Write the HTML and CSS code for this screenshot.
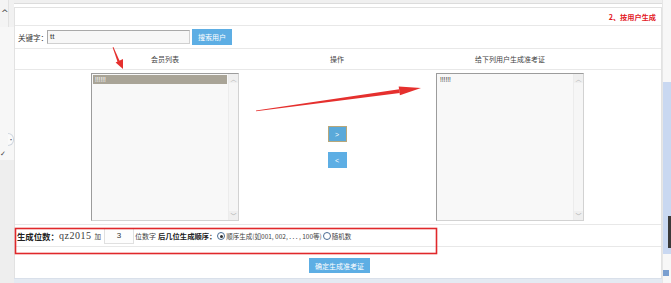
FILE: index.html
```
<!DOCTYPE html>
<html>
<head>
<meta charset="utf-8">
<link rel="stylesheet" href="styles.css">
</head>
<body>
<div class="page">
  <div class="leftbar">
    <div class="lb-top"><span class="caret">^</span></div>
    <div class="lb-mid"><span class="tab">•</span><span class="check">✓</span></div>
    <div class="lb-bot"></div>
  </div>
  <div class="main">
    <div class="topband"></div>
    <div class="panel">
      <div class="row row-title"><span class="title">2、按用户生成</span></div>
      <div class="row row-search">
        <span class="lbl">关键字：</span>
        <div class="kw">tt</div>
        <div class="btn btn-search">搜索用户</div>
      </div>
      <div class="row row-head grid3">
        <div class="hcell">会员列表</div>
        <div class="hcell">操作</div>
        <div class="hcell">给下列用户生成准考证</div>
      </div>
      <div class="row row-body grid3">
        <div class="bcell">
          <div class="listbox">
            <div class="lb-content"><div class="opt opt-sel">!!!!!!</div></div>
            <div class="lb-scroll"><span class="sarrow">︿</span><span class="sarrow">﹀</span></div>
          </div>
        </div>
        <div class="bcell ops">
          <div class="btn btn-op btn-focus">&gt;</div>
          <div class="btn btn-op">&lt;</div>
        </div>
        <div class="bcell">
          <div class="listbox">
            <div class="lb-content"><div class="opt">!!!!!!</div></div>
            <div class="lb-scroll"><span class="sarrow">︿</span><span class="sarrow">﹀</span></div>
          </div>
        </div>
      </div>
      <div class="row row-opts">
        <span class="b b1">生成位数：</span>
        <span class="prefix">qz2015</span>
        <span class="t t-add">加</span>
        <div class="num">3</div>
        <span class="t t-digits">位数字</span>
        <span class="b b2">后几位生成顺序：</span>
        <span class="radio on"></span><span class="t t-seq">顺序生成(如001, 002, . . . , 100等)</span>
        <span class="radio"></span><span class="t">随机数</span>
      </div>
      <div class="row row-submit">
        <div class="btn btn-submit">确定生成准考证</div>
      </div>
    </div>
    <div class="bottomband"></div>
  </div>
  <div class="rightbar">
    <div class="rb-thumb"><div class="rb-dark"></div></div>
    <div class="rb-icon"></div>
  </div>
  <svg class="annot" width="671" height="283" viewBox="0 0 671 283">
    <rect x="15.5" y="228.5" width="421" height="25" fill="none" stroke="#e0282b" stroke-width="1.6"/>
    <polygon points="112.6,47.2 113.4,46.9 119.8,61.3 117.6,62.1" fill="#e5302e"/>
    <polygon points="123,69 115.6,62.6 123,59" fill="#e5302e"/>
    <polygon points="256,111.3 256,110.6 399.2,89.2 399.8,93" fill="#e5302e"/>
    <polygon points="421,88 398.7,86.6 399.9,95.2" fill="#e5302e"/>
  </svg>
</div>
</body>
</html>
```
FILE: styles.css
```
html, body { margin: 0; padding: 0; }
body {
  width: 671px; height: 283px; overflow: hidden;
  font-family: "Noto Sans CJK SC", "Noto Sans", sans-serif;
  font-size: 7px; color: #333; background: #fff;
}
.page { position: relative; display: flex; width: 671px; height: 283px; }

.leftbar { width: 14px; display: flex; flex-direction: column; background: #f1f1f1; }
.lb-top { height: 27px; width: 8px; border-right: 1px solid #e2e2e2; background: #f4f4f4; }
.caret { display: block; font-family: "DejaVu Sans", sans-serif; font-size: 9px; line-height: 9px; color: #444; padding: 9px 0 0 1px; }
.lb-mid { height: 133px; background: #f7f7f7; display: flex; flex-direction: column; }
.tab { margin: 106px 0 0 8px; width: 5px; height: 11px; border: 1px solid #cfd6df; border-left: none; border-radius: 0 6px 6px 0; background: #fafafa; font-size: 6px; line-height: 11px; color: #445; text-align: center; }
.check { font-family: "DejaVu Sans", sans-serif; font-size: 7px; line-height: 8px; color: #444; margin-top: 4px; }
.lb-bot { flex: 1; background: #eeeeee; }

.main { width: 649px; display: flex; flex-direction: column; }
.topband { height: 3px; background: #f0f0f0; border-bottom: 1px solid #dcdcdc; margin-bottom: 3px; }
.panel { flex: 1; border: 1px solid #e2e2e2; border-bottom: none; display: flex; flex-direction: column; }
.bottomband { height: 4px; background: #e4eaf2; border-top: 1px solid #d9e0ea; }

.row { border-bottom: 1px solid #e8e8e8; }
.row-title { height: 17px; display: flex; align-items: center; justify-content: flex-end; padding-right: 5px; }
.title { color: #e3191f; font-weight: bold; font-size: 7.2px; }

.row-search { height: 22px; display: flex; align-items: center; padding-left: 3px; }
.lbl { width: 29px; flex-shrink: 0; white-space: nowrap; font-size: 7.5px; color: #333; }
.kw { flex-shrink: 0; width: 143px; height: 14px; box-sizing: border-box; border: 1px solid; border-color: #a9a9a9 #d0d0d0 #d0d0d0 #a9a9a9; background: #f7f7f7; font-family: "Liberation Sans", sans-serif; font-size: 8px; line-height: 12px; padding-left: 2px; }
.btn { background: #5daee4; color: #fff; display: flex; align-items: center; justify-content: center; font-size: 7px; }
.btn-search { width: 40px; height: 16px; margin-left: 2px; }

.grid3 { display: grid; grid-template-columns: 300px 44px 1fr; }
.row-head { height: 20px; align-items: center; }
.hcell { text-align: center; font-size: 7px; color: #444; }

.row-body { height: 154px; }
.bcell { display: flex; justify-content: center; padding-top: 3px; }
.listbox { width: 148px; height: 148px; box-sizing: border-box; border: 1px solid; border-color: #9c9c9c #d2d2d2 #d2d2d2 #9c9c9c; background: #f8f8f8; display: flex; }
.lb-content { flex: 1; padding: 1px; }
.opt { height: 9px; font-family: "Liberation Sans", sans-serif; font-size: 6.5px; line-height: 9px; padding-left: 2px; color: #333; }
.opt-sel { background: #a9a497; color: #fff; }
.lb-scroll { width: 9px; background: #f6f6f6; border-left: 1px solid #ececec; display: flex; flex-direction: column; justify-content: space-between; }
.sarrow { height: 9px; font-size: 6px; line-height: 9px; text-align: center; color: #aaa; background: #efefef; }
.ops { flex-direction: column; align-items: center; padding-top: 56px; gap: 10px; justify-content: flex-start; }
.btn-op { width: 19px; height: 16px; box-sizing: border-box; font-family: "Liberation Sans", sans-serif; font-size: 7px; }
.btn-focus { border: 1px solid #b7a77a; background: #5aa9d9; }

.row-opts { height: 22px; display: flex; align-items: flex-start; padding: 3px 0 0 2px; box-sizing: border-box; white-space: nowrap; }
.row-opts > * { line-height: 16px; flex-shrink: 0; }
.b { font-weight: bold; color: #222; }
.b1 { font-size: 8.4px; width: 42px; }
.prefix { font-family: "Liberation Serif", serif; font-size: 10px; color: #3a3a3a; letter-spacing: 0.5px; }
.t { font-size: 6.5px; color: #444; }
.t-add { margin-left: 3px; }
.num { width: 30px; height: 16px; box-sizing: border-box; border: 1px solid #e0e0e0; background: #fdfdfd; margin: 0 1px 0 3px; text-align: center; font-family: "Liberation Sans", sans-serif; font-size: 8px; line-height: 14px; }
.t-digits { font-size: 7px; }
.b2 { font-size: 7.3px; margin-left: 2px; }
.radio { width: 6px; height: 6px; border: 1px solid #4a6d95; border-radius: 50%; margin: 4px 1px 0 1px; box-sizing: content-box; background: #fff; position: relative; }
.radio.on::after { content: ""; position: absolute; left: 1.5px; top: 1.5px; width: 3px; height: 3px; border-radius: 50%; background: #333; }

.row-submit { flex: 1; border-bottom: none; display: flex; justify-content: center; padding-top: 11px; }
.btn-submit { width: 61px; height: 15px; font-size: 7px; margin-left: 3px; }

.rightbar { width: 8px; border-left: 1px solid #e6e6e6; background: #f7f7f7; display: flex; flex-direction: column; }
.rb-thumb { margin-top: 82px; height: 172px; background: #c9d8f1; display: flex; flex-direction: column; align-items: flex-end; }
.rb-dark { margin-top: 134px; width: 3px; height: 32px; background: #3a3a3a; }
.rb-icon { margin-top: 16px; width: 6px; height: 6px; background: #7a9fd0; }

.annot { position: absolute; left: 0; top: 0; pointer-events: none; }
```
